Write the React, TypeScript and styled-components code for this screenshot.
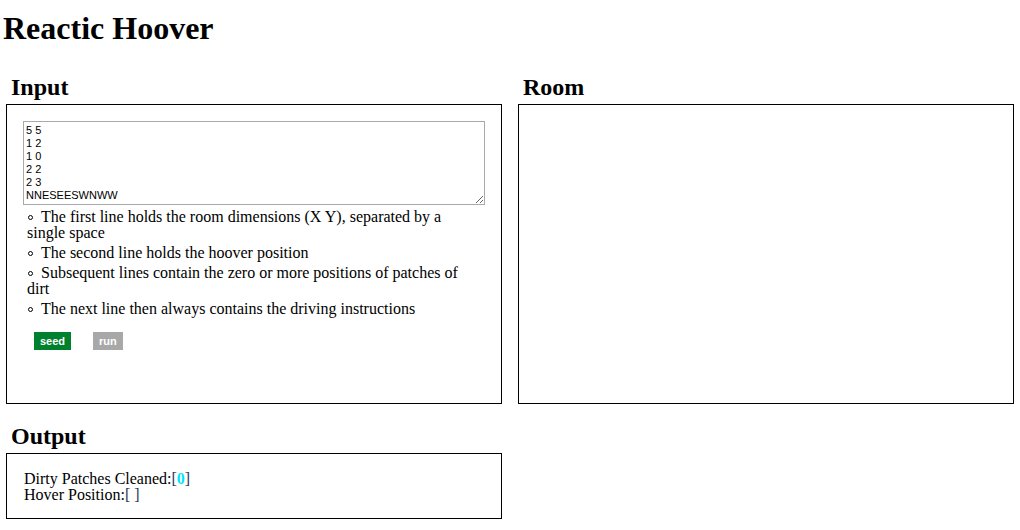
import React from "react";
import styled, { createGlobalStyle } from "styled-components";

const GlobalStyle = createGlobalStyle`
  html, body {
    margin: 0;
    padding: 0;
    background: #fff;
    color: #000;
    font-family: "Liberation Serif", "Times New Roman", serif;
  }
`;

const Page = styled.div`
  width: 1020px;
  padding-bottom: 10px;
`;

const Title = styled.h1`
  margin: 10px 0 0 3px;
  font-size: 32px;
  line-height: 37px;
  font-weight: bold;
`;

const Grid = styled.div`
  display: grid;
  grid-template-columns: 496px 496px;
  column-gap: 16px;
  row-gap: 18px;
  margin: 26px 0 0 6px;
`;

const Section = styled.section`
  display: flex;
  flex-direction: column;
`;

const Heading = styled.h2`
  margin: 0 0 3px 0;
  padding-left: 5px;
  font-size: 24px;
  line-height: 28px;
  font-weight: bold;
`;

const Box = styled.div<{ $height: number }>`
  box-sizing: border-box;
  border: 1px solid #000;
  height: ${(p) => p.$height}px;
  padding: 16px;
`;

const OutputBox = styled.div`
  box-sizing: border-box;
  border: 1px solid #000;
  height: 66px;
  padding: 17px 16px 0 17px;
  font-size: 16px;
  line-height: 16px;
`;

const Input = styled.textarea`
  display: block;
  box-sizing: border-box;
  width: 462px;
  height: 84px;
  margin: 0;
  padding: 2px 2px;
  border: 1px solid #a9a9a9;
  font-family: "Liberation Sans", Arial, sans-serif;
  font-size: 11px;
  line-height: 13px;
  color: #000;
  resize: vertical;
`;

const Notes = styled.ul`
  margin: 4px 0 0 0;
  padding: 0 20px 0 4px;
  list-style: none;
  font-size: 16px;
  line-height: 16px;
`;

const Note = styled.li`
  margin-bottom: 4px;
  &::before {
    content: "";
    display: inline-block;
    box-sizing: border-box;
    width: 5px;
    height: 5px;
    margin: 0 8px 0 1px;
    border: 1px solid #000;
    border-radius: 50%;
    vertical-align: 2px;
  }
`;

const Buttons = styled.div`
  display: flex;
  gap: 22px;
  margin: 15px 0 0 11px;
`;

const Button = styled.button<{ $tone: "go" | "off" }>`
  height: 18px;
  padding: 0 6px;
  border: none;
  border-radius: 0;
  background: ${(p) => (p.$tone === "go" ? "#00812e" : "#a8a8a8")};
  color: #fff;
  font-family: "Liberation Sans", Arial, sans-serif;
  font-weight: bold;
  font-size: 11px;
  line-height: 18px;
  cursor: pointer;
`;

const Bracket = styled.span`
  color: #2b3550;
`;

const Count = styled.span`
  color: #00e5ff;
  font-weight: bold;
`;

const initial = `5 5
1 2
1 0
2 2
2 3
NNESEESWNWW`;

export default function App() {
  return (
    <Page>
      <GlobalStyle />
      <Title>Reactic Hoover</Title>
      <Grid>
        <Section>
          <Heading>Input</Heading>
          <Box $height={300}>
            <Input defaultValue={initial} />
            <Notes>
              <Note>The first line holds the room dimensions (X Y), separated by a single space</Note>
              <Note>The second line holds the hoover position</Note>
              <Note>Subsequent lines contain the zero or more positions of patches of dirt</Note>
              <Note>The next line then always contains the driving instructions</Note>
            </Notes>
            <Buttons>
              <Button $tone="go">seed</Button>
              <Button $tone="off">run</Button>
            </Buttons>
          </Box>
        </Section>
        <Section>
          <Heading>Room</Heading>
          <Box $height={300} />
        </Section>
        <Section>
          <Heading>Output</Heading>
          <OutputBox>
            <div>
              Dirty Patches Cleaned:<Bracket>[</Bracket>
              <Count>0</Count>
              <Bracket>]</Bracket>
            </div>
            <div>
              Hover Position:<Bracket>[ ]</Bracket>
            </div>
          </OutputBox>
        </Section>
      </Grid>
    </Page>
  );
}
